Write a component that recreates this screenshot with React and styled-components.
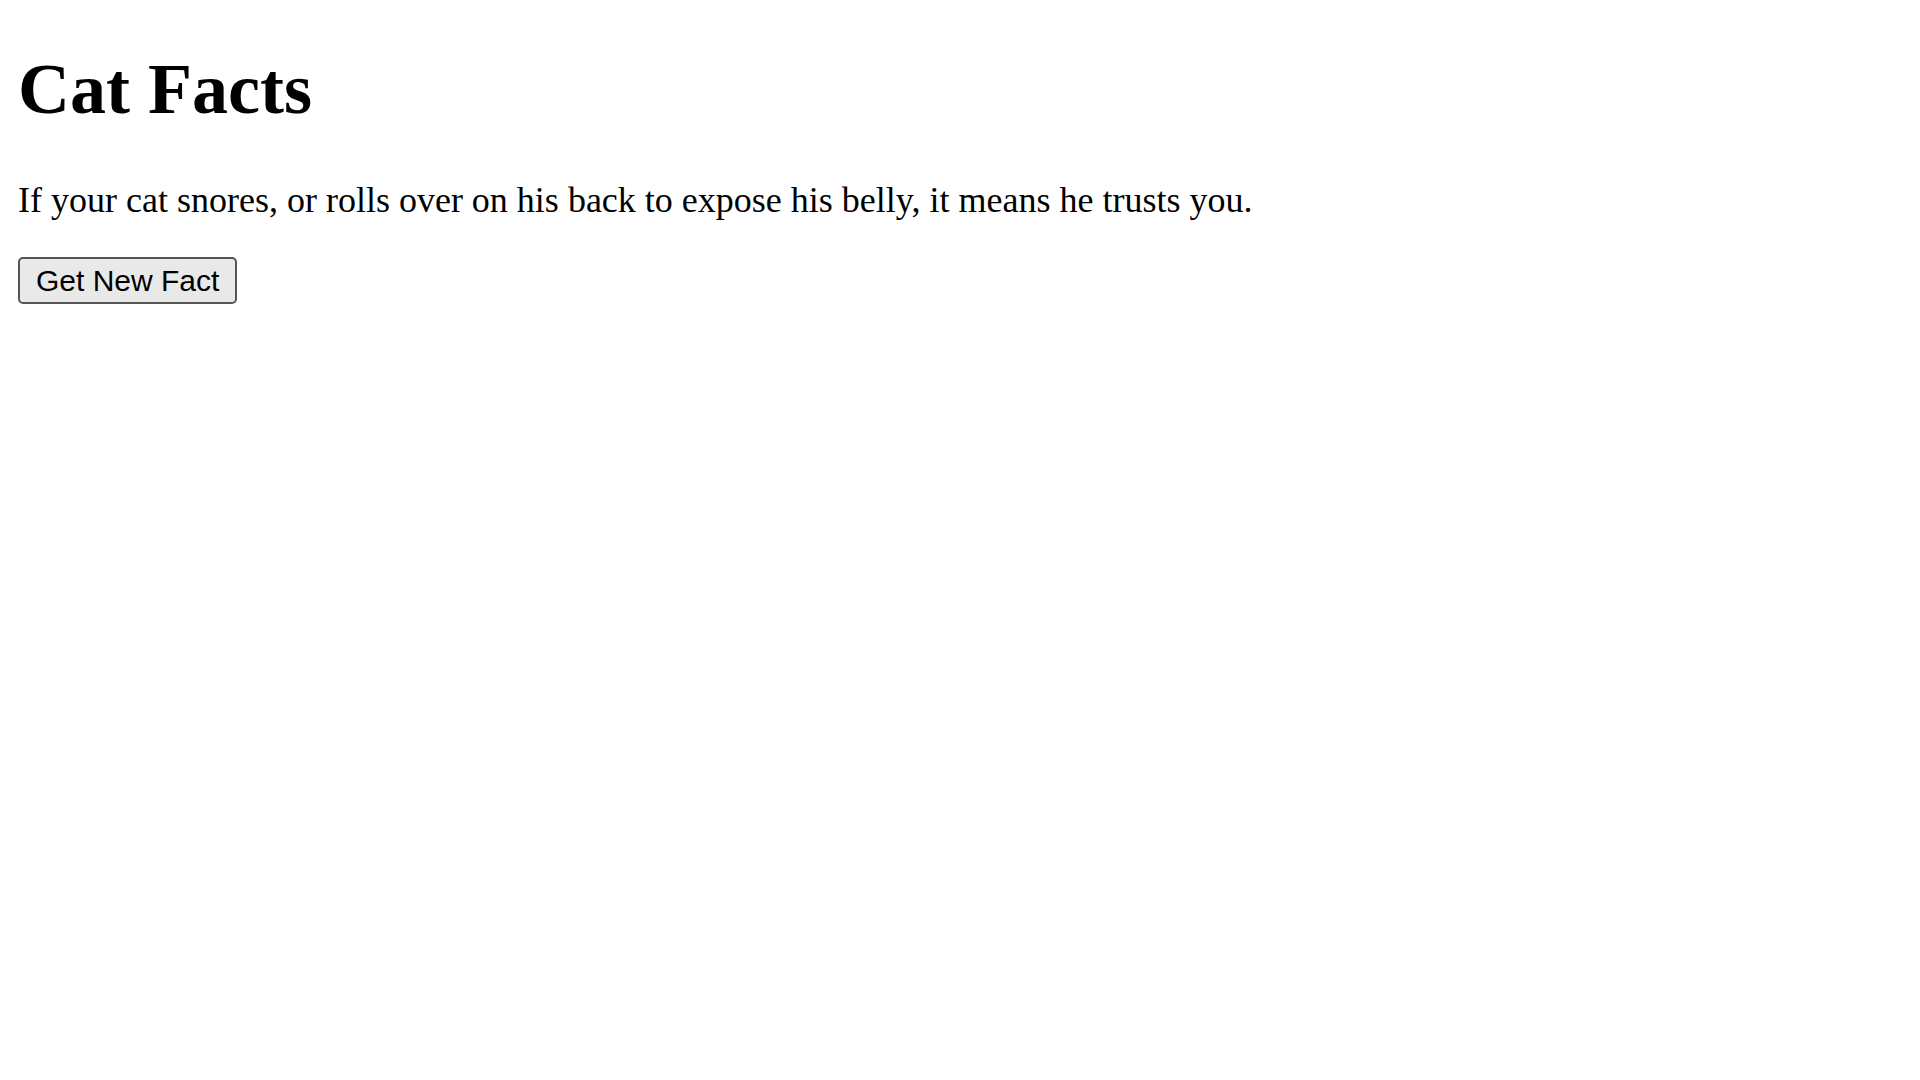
import React, { useState } from 'react'
import styled, { createGlobalStyle } from 'styled-components'

const GlobalStyle = createGlobalStyle`
  html, body {
    margin: 0;
    padding: 0;
    background: #ffffff;
  }
  body {
    font-family: "Liberation Serif", "Times New Roman", serif;
    color: #000000;
  }
`

const Page = styled.main`
  padding: 0 18px;
  display: flow-root;
`

const Title = styled.h1`
  font-size: 72px;
  font-weight: bold;
  margin: 48px 0;
`

const Fact = styled.p`
  font-size: 36px;
  margin: 36px 0;
`

const Button = styled.button`
  font-family: "Liberation Sans", Arial, sans-serif;
  font-size: 30px;
  color: #000000;
  background: #e9e9e9;
  border: 2px solid #555555;
  border-radius: 5px;
  padding: 5px 16px 4px;
  cursor: pointer;
`

const facts = [
  'If your cat snores, or rolls over on his back to expose his belly, it means he trusts you.',
  'Cats sleep for around 13 to 16 hours a day.',
  'A group of cats is called a clowder.'
]

const App = () => {
  const [index, setIndex] = useState(0)
  return (
    <>
      <GlobalStyle />
      <Page>
        <Title>Cat Facts</Title>
        <Fact>{facts[index]}</Fact>
        <Button onClick={() => setIndex((index + 1) % facts.length)}>Get New Fact</Button>
      </Page>
    </>
  )
}

export default App
